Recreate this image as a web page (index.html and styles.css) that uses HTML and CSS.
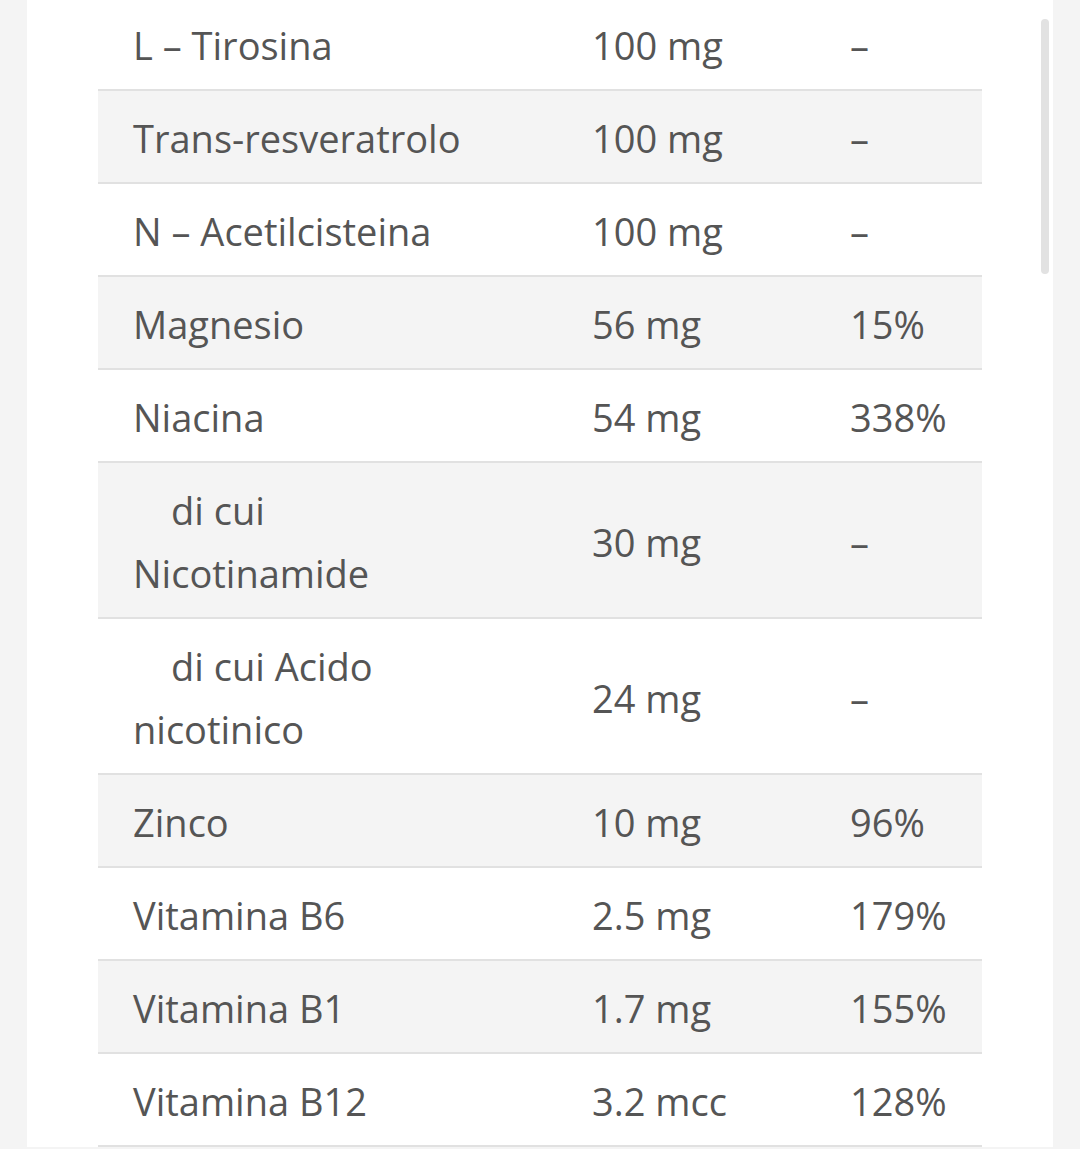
FILE: index.html
```html
<!DOCTYPE html>
<html lang="it">
<head>
<meta charset="utf-8">
<title>Valori nutrizionali</title>
<link rel="stylesheet" href="styles.css">
</head>
<body>
<div class="panel">
  <table class="nutri">
    <colgroup><col class="c1"><col class="c2"><col class="c3"></colgroup>
    <tbody>
      <tr><td>L – Tirosina</td><td>100 mg</td><td>–</td></tr>
      <tr class="alt"><td>Trans-resveratrolo</td><td>100 mg</td><td>–</td></tr>
      <tr><td>N – Acetilcisteina</td><td>100 mg</td><td>–</td></tr>
      <tr class="alt"><td>Magnesio</td><td>56 mg</td><td>15%</td></tr>
      <tr><td>Niacina</td><td>54 mg</td><td>338%</td></tr>
      <tr class="alt"><td><div class="sub">di cui<br>Nicotinamide</div></td><td>30 mg</td><td>–</td></tr>
      <tr><td><div class="sub">di cui Acido<br>nicotinico</div></td><td>24 mg</td><td>–</td></tr>
      <tr class="alt"><td>Zinco</td><td>10 mg</td><td>96%</td></tr>
      <tr><td>Vitamina B6</td><td>2.5 mg</td><td>179%</td></tr>
      <tr class="alt"><td>Vitamina B1</td><td>1.7 mg</td><td>155%</td></tr>
      <tr><td>Vitamina B12</td><td>3.2 mcc</td><td>128%</td></tr>
    </tbody>
  </table>
  <div class="scrollbar"></div>
</div>
</body>
</html>
```
FILE: styles.css
```css
html, body {
  margin: 0;
  padding: 0;
  background: #f4f4f4;
}
body {
  height: 1149px;
  overflow: hidden;
}
.panel {
  position: relative;
  margin: 0 27px;
  background: #ffffff;
  height: 1149px;
  padding-left: 71px;
}
.nutri {
  border-collapse: collapse;
  width: 884px;
  table-layout: fixed;
  margin-top: -2px;
  font-family: "Open Sans", "Liberation Sans", sans-serif;
  font-size: 38px;
  line-height: 63px;
  color: #555555;
}
.c1 { width: 459px; }
.c2 { width: 258px; }
.c3 { width: 167px; }
.nutri td {
  padding: 16px 0 12px 35px;
  border-bottom: 2px solid #e1e1e1;
  vertical-align: middle;
  white-space: nowrap;
}
.nutri tr.alt td {
  background: #f4f4f4;
}
.sub {
  text-indent: 38px;
}
.scrollbar {
  position: absolute;
  left: 1014px;
  top: 21px;
  width: 8px;
  height: 255px;
  border-radius: 4px;
  background: #e2e2e2;
}
```
